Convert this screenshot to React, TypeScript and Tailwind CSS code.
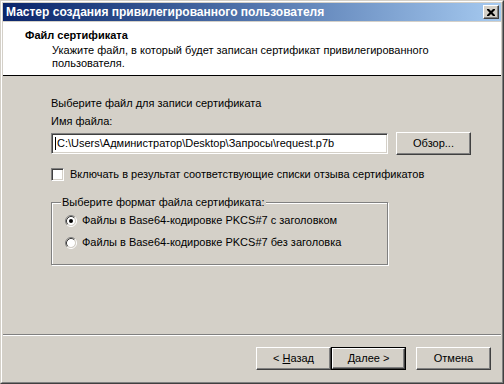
import React from "react";

function Radio({ checked }: { checked?: boolean }) {
  return (
    <svg width="12" height="12" viewBox="0 0 12 12" className="shrink-0">
      <path d="M2.1 9.9 A5.5 5.5 0 0 1 9.9 2.1" fill="none" stroke="#808080" />
      <path d="M9.9 2.1 A5.5 5.5 0 0 1 2.1 9.9" fill="none" stroke="#ffffff" />
      <circle cx="6" cy="6" r="4" fill="#fff" />
      <path d="M2.82 9.18 A4.5 4.5 0 0 1 9.18 2.82" fill="none" stroke="#404040" />
      <path d="M9.18 2.82 A4.5 4.5 0 0 1 2.82 9.18" fill="none" stroke="#d4d0c8" />
      {checked && <circle cx="6" cy="6" r="2" fill="#000" />}
    </svg>
  );
}

function Btn({ children, def }: { children: React.ReactNode; def?: boolean }) {
  if (def) {
    return (
      <div className="w-[75px] h-[23px] border border-black flex">
        <div className="flex-1 flex items-center justify-center border border-t-white border-l-white border-r-[#404040] border-b-[#404040] shadow-[inset_-1px_-1px_0_#808080]">
          {children}
        </div>
      </div>
    );
  }
  return (
    <div className="w-[75px] h-[23px] flex items-center justify-center border border-t-white border-l-white border-r-[#404040] border-b-[#404040] shadow-[inset_-1px_-1px_0_#808080]">
      {children}
    </div>
  );
}

export default function App() {
  return (
    <div className="w-[504px] h-[384px] bg-[#d4d0c8] text-[11px] leading-[13px] text-black font-['Liberation_Sans',Arial,sans-serif]">
      <div className="w-full h-full border border-t-[#d4d0c8] border-l-[#d4d0c8] border-r-[#404040] border-b-[#404040]">
        <div className="w-full h-full border border-t-white border-l-white border-r-[#808080] border-b-[#808080] p-px flex flex-col">
          {/* Title bar */}
          <div className="h-[18px] shrink-0 flex items-center bg-linear-to-r from-[#0a246a] to-[#a6caf0] pl-[3px] pr-[2px]">
            <span className="text-white font-bold text-[12px] flex-1">
              Мастер создания привилегированного пользователя
            </span>
            <div className="w-[16px] h-[14px] bg-[#d4d0c8] border border-t-white border-l-white border-r-[#404040] border-b-[#404040] shadow-[inset_-1px_-1px_0_#808080] flex items-center justify-center">
              <svg width="8" height="7" viewBox="0 0 8 7">
                <path d="M0 0h2l2 2 2-2h2v1L5.5 3.5 8 6v1H6L4 5 2 7H0V6l2.5-2.5L0 1z" fill="#000" />
              </svg>
            </div>
          </div>
          {/* Header */}
          <div className="mt-px h-[54px] shrink-0 bg-white border-b border-black pl-[22px] pt-[7px]">
            <div className="font-bold">Файл сертификата</div>
            <div className="pl-[27px] mt-[2px]">
              Укажите файл, в который будет записан сертификат привилегированного
              <br />
              пользователя.
            </div>
          </div>
          {/* Body */}
          <div className="flex-1 flex flex-col pl-[48px] pt-[21px]">
            <div>Выберите файл для записи сертификата</div>
            <div className="mt-[5px]">Имя файла:</div>
            <div className="mt-[4px] flex items-center gap-[8px]">
              <div className="w-[337px] h-[21px] bg-white border border-t-[#808080] border-l-[#808080] border-r-white border-b-white shadow-[inset_1px_1px_0_#404040,inset_-1px_-1px_0_#d4d0c8] flex items-center pl-[3px]">
                <span className="w-px h-[13px] bg-black mr-px" />
                <span>C:\Users\Администратор\Desktop\Запросы\request.p7b</span>
              </div>
              <Btn>Обзор...</Btn>
            </div>
            <div className="mt-[13px] flex items-center gap-[6px]">
              <div className="w-[13px] h-[13px] bg-white border border-t-[#808080] border-l-[#808080] border-r-white border-b-white shadow-[inset_1px_1px_0_#404040,inset_-1px_-1px_0_#d4d0c8]" />
              <span>Включать в результат соответствующие списки отзыва сертификатов</span>
            </div>
            <div className="relative mt-[21px] w-[337px] h-[63px] border border-[#808080] shadow-[inset_1px_1px_0_#fff,1px_1px_0_#fff] flex flex-col pl-[13px] pt-[11px] gap-[9px]">
              <span className="absolute left-[9px] top-[-7px] bg-[#d4d0c8] px-px">
                Выберите формат файла сертификата:
              </span>
              <div className="flex items-center gap-[5px]">
                <Radio checked />
                <span>Файлы в Base64-кодировке PKCS#7 с заголовком</span>
              </div>
              <div className="flex items-center gap-[5px]">
                <Radio />
                <span>Файлы в Base64-кодировке PKCS#7 без заголовка</span>
              </div>
            </div>
          </div>
          {/* Separator */}
          <div className="h-[2px] shrink-0 border-t border-[#808080] border-b border-b-white" />
          {/* Footer */}
          <div className="h-[45px] shrink-0 flex items-start justify-end pt-[11px] pr-[10px]">
            <Btn>
              <span>
                &lt; <u>Н</u>азад
              </span>
            </Btn>
            <Btn def>
              <span>
                <u>Д</u>алее &gt;
              </span>
            </Btn>
            <div className="ml-[10px]">
              <Btn>Отмена</Btn>
            </div>
          </div>
        </div>
      </div>
    </div>
  );
}
